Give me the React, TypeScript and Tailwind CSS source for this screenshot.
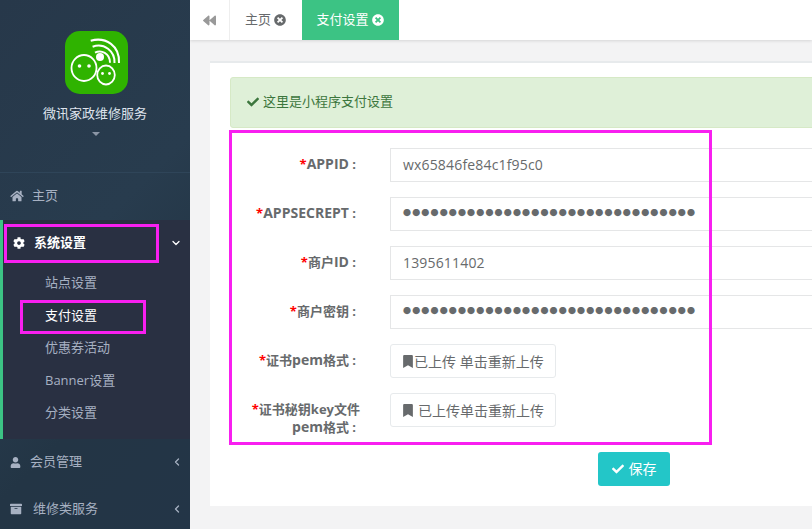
import React from 'react';
import { FaArchive, FaBackward, FaBookmark, FaCheck, FaCog, FaHome, FaTimesCircle, FaUser } from 'react-icons/fa';
import { ChevronDown, ChevronLeft } from 'lucide-react';

const font = "font-['Open_Sans','Noto_Sans_CJK_SC',sans-serif]";

const Logo = () => (
  <svg viewBox="0 0 63 63" className="ml-[2px] h-[63px] w-[63px]">
    <rect width="63" height="63" rx="15" fill="#2fb300" />
    <circle cx="35" cy="26" r="4" fill="#fff" />
    <path d="M25.700 9.700C41 5.500 55 15 54 32" fill="none" stroke="#fff" strokeWidth="2" />
    <path d="M27.600 15.700C39 11.500 50 20 49.500 32" fill="none" stroke="#fff" strokeWidth="2" />
    <path d="M30 21.700C36 18.500 45 22 45 31.700" fill="none" stroke="#fff" strokeWidth="2" />
    <ellipse cx="19" cy="37" rx="12.500" ry="13" fill="#2fb300" stroke="#fff" strokeWidth="1.800" />
    <circle cx="14.500" cy="35" r="1.800" fill="#fff" />
    <circle cx="24" cy="35" r="1.800" fill="#fff" />
    <ellipse cx="41" cy="44" rx="8.800" ry="9.500" fill="#2fb300" stroke="#fff" strokeWidth="1.800" />
    <circle cx="37.500" cy="42.500" r="1.400" fill="#fff" />
    <circle cx="44.500" cy="42.500" r="1.400" fill="#fff" />
  </svg>
);

const SUB_ITEMS = ['站点设置', '支付设置', '优惠券活动', 'Banner设置', '分类设置'];

const Sidebar = () => (
  <aside className="relative h-full w-[190px] shrink-0 overflow-hidden bg-[#253648] bg-[linear-gradient(135deg,#27384a_0%,#283c4e_45%,#233545_70%,#233547_100%)] text-[13px] text-[#a7b1c2]">
    <div className="flex h-[173px] flex-col items-center border-b border-[#2f4559] pt-[31px]">
      <Logo />
      <div className="mt-[9px] leading-[20px] text-[#dfe4ed]">微讯家政维修服务</div>
      <div className="ml-[2px] mt-[9px] h-0 w-0 border-x-[4px] border-t-[4px] border-x-transparent border-t-[#8b96a6]" />
    </div>
    <div className="flex h-[47px] items-center pb-[1px] pl-[10px]">
      <FaHome className="w-[14px] text-[12px]" />
      <span className="ml-[8px]">主页</span>
    </div>
    <div className="h-[219px] border-l-[3px] border-[#3cc384] bg-[#293042]">
      <div className="flex h-[47px] items-center pb-[1px] pl-[10px] pr-[8px] font-semibold text-white">
        <FaCog className="text-[12px]" />
        <span className="ml-[9px]">系统设置</span>
        <ChevronDown size={12} strokeWidth={2.5} className="ml-auto" />
      </div>
      <ul className="pl-[42px]">
        {SUB_ITEMS.map((s) => (
          <li key={s} className={`flex h-[32.500px] items-center pb-[1px] ${s === '支付设置' ? 'text-white' : ''}`}>{s}</li>
        ))}
      </ul>
    </div>
    <div className="flex h-[46px] items-center pl-[10px] pr-[7px]">
      <FaUser className="text-[11px]" />
      <span className="ml-[9px]">会员管理</span>
      <ChevronLeft size={12} strokeWidth={2.5} className="ml-auto" />
    </div>
    <div className="flex h-[47px] items-center pl-[10px] pr-[7px]">
      <FaArchive className="text-[12px]" />
      <span className="ml-[11px]">维修类服务</span>
      <ChevronLeft size={12} strokeWidth={2.5} className="ml-auto" />
    </div>
  </aside>
);

const TabBar = () => (
  <div className="flex h-[40px] shrink-0 items-stretch bg-white text-[13px] shadow-[0_1px_3px_rgba(0,0,0,0.12)]">
    <div className="flex w-[40px] items-center justify-center border-r border-[#eeeeee] text-[#999999]">
      <FaBackward className="text-[13px]" />
    </div>
    <div className="flex w-[72px] items-center justify-center gap-[3px] pr-[1px] text-[#676a6c]">
      主页 <FaTimesCircle className="text-[12px]" />
    </div>
    <div className="flex w-[97px] items-center justify-center gap-[3px] bg-[#3cc384] pr-[1px] text-white">
      支付设置 <FaTimesCircle className="text-[12px]" />
    </div>
  </div>
);

const Latin = ({ children }: { children: React.ReactNode }) => <span className="text-[14px]">{children}</span>;

const Label = ({ children }: { children: React.ReactNode }) => (
  <label className="w-[130px] shrink-0 pr-[4px] pt-[7px] text-right text-[13px] font-bold leading-[18px] text-[#676a6c]">
    <span className="text-[#ff0000]">*</span>
    {children}
  </label>
);

const Field = ({ label, value, secret }: { label: React.ReactNode; value: string; secret?: boolean }) => (
  <div className="flex h-[34px] items-start">
    <Label>{label} :</Label>
    <div className={`ml-[30px] flex h-[34px] w-[500px] shrink-0 items-center border border-[#e5e6e7] bg-white pb-[2px] pl-[12px] text-[#676a6c] ${secret ? 'text-[8px] tracking-[1.160px]' : 'text-[14px] tracking-[0.170px]'}`}>
      {value}
    </div>
  </div>
);

const UploadBtn = ({ children }: { children: React.ReactNode }) => (
  <div className="ml-[30px] flex h-[34px] w-[166px] shrink-0 items-center rounded-[3px] border border-[#e7eaec] bg-white pl-[12px] text-[14px] text-[#676a6c]">
    {children}
  </div>
);

const DOTS = '●'.repeat(32);

export default function App() {
  return (
    <div className={`relative flex h-[529px] w-[812px] overflow-hidden bg-[#f3f3f4] ${font}`}>
      <Sidebar />
      <main className="flex min-w-0 flex-1 flex-col">
        <TabBar />
        <div className="overflow-hidden pl-[20px] pt-[21px]">
          <div className="h-[445px] w-[640px] border-t-2 border-[#e7eaec] bg-white pl-[20px] pt-[14px]">
            <div className="flex h-[51px] w-[620px] items-center gap-[4px] rounded-[3px] border border-[#d6e9c6] bg-[#dff0d8] pb-[1px] pl-[16px] text-[13px] text-[#3c763d]">
              <FaCheck className="text-[12px]" />
              这里是小程序支付设置
            </div>
            <div className="flex w-[700px] flex-col gap-[15px] pt-[20px]">
              <Field label={<Latin>APPID</Latin>} value="wx65846fe84c1f95c0" />
              <Field label={<Latin>APPSECREPT</Latin>} value={DOTS} secret />
              <Field label={<>商户<Latin>ID</Latin></>} value="1395611402" />
              <Field label="商户密钥" value={DOTS} secret />
              <div className="flex h-[34px] items-start">
                <Label>证书<Latin>pem</Latin>格式 :</Label>
                <UploadBtn>
                  <FaBookmark className="mr-[1px] h-[13px] w-[10px]" />已上传 单击重新上传
                </UploadBtn>
              </div>
              <div className="flex h-[34px] items-start">
                <Label>
                  <span className="-mr-[4px]">证书秘钥key文件</span>
                  <br />
                  <Latin>pem</Latin>格式 :
                </Label>
                <UploadBtn>
                  <FaBookmark className="mr-[5px] h-[13px] w-[10px]" />已上传单击重新上传
                </UploadBtn>
              </div>
            </div>
            <div className="ml-[368px] mt-[25px] flex h-[34px] w-[72px] items-center justify-center gap-[5px] rounded-[3px] bg-[#23c6c8] pb-[1px] text-[14px] text-white">
              <FaCheck className="text-[12px]" />
              保存
            </div>
          </div>
        </div>
      </main>
      <div className="absolute left-[4px] top-[224px] h-[39px] w-[155px] border-[3px] border-[#f81ff0]" />
      <div className="absolute left-[20px] top-[300px] h-[34px] w-[126px] border-[3px] border-[#f81ff0]" />
      <div className="absolute left-[229px] top-[130px] h-[315px] w-[483px] border-[3px] border-[#f81ff0]" />
    </div>
  );
}
